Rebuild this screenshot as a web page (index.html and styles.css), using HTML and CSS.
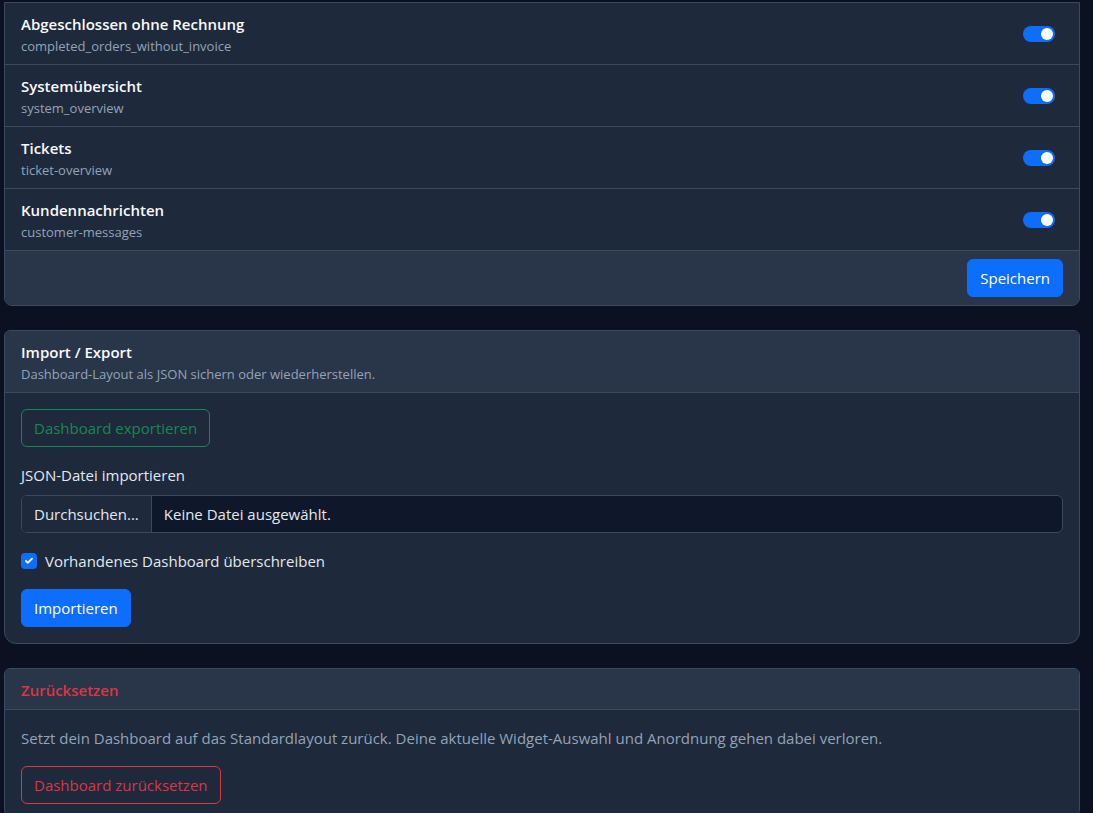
FILE: index.html
```html
<!DOCTYPE html>
<html lang="de">
<head>
    <meta charset="UTF-8">
    <meta name="viewport" content="width=device-width, initial-scale=1.0">
    <title>Dashboard-Einstellungen</title>
    <link rel="stylesheet" href="styles.css">
</head>
<body>
<div class="page">
    <div class="card card-clipped">
        <div class="widget-list">
            <div class="widget-row">
                <div>
                    <div class="widget-title">Abgeschlossen ohne Rechnung</div>
                    <div class="widget-key">completed_orders_without_invoice</div>
                </div>
                <span class="switch on"></span>
            </div>
            <div class="widget-row">
                <div>
                    <div class="widget-title">Systemübersicht</div>
                    <div class="widget-key">system_overview</div>
                </div>
                <span class="switch on"></span>
            </div>
            <div class="widget-row">
                <div>
                    <div class="widget-title">Tickets</div>
                    <div class="widget-key">ticket-overview</div>
                </div>
                <span class="switch on"></span>
            </div>
            <div class="widget-row">
                <div>
                    <div class="widget-title">Kundennachrichten</div>
                    <div class="widget-key">customer-messages</div>
                </div>
                <span class="switch on"></span>
            </div>
        </div>
        <div class="card-footer">
            <button class="btn btn-primary">Speichern</button>
        </div>
    </div>

    <div class="card">
        <div class="card-header">
            <div class="card-title">Import / Export</div>
            <div class="card-subtitle">Dashboard-Layout als JSON sichern oder wiederherstellen.</div>
        </div>
        <div class="card-body">
            <button class="btn btn-outline-success">Dashboard exportieren</button>
            <div class="field-label">JSON-Datei importieren</div>
            <div class="file-input">
                <span class="file-button">Durchsuchen...</span>
                <span class="file-name">Keine Datei ausgewählt.</span>
            </div>
            <label class="check-row">
                <span class="checkbox">
                    <svg viewBox="0 0 20 20" width="12" height="12"><path d="M5 10l3 3 7-7" fill="none" stroke="#fff" stroke-width="3" stroke-linecap="round" stroke-linejoin="round"/></svg>
                </span>
                Vorhandenes Dashboard überschreiben
            </label>
            <button class="btn btn-primary">Importieren</button>
        </div>
    </div>

    <div class="card">
        <div class="card-header">
            <div class="card-title text-danger">Zurücksetzen</div>
        </div>
        <div class="card-body">
            <p class="muted">Setzt dein Dashboard auf das Standardlayout zurück. Deine aktuelle Widget-Auswahl und Anordnung gehen dabei verloren.</p>
            <button class="btn btn-outline-danger">Dashboard zurücksetzen</button>
        </div>
    </div>
</div>
</body>
</html>
```

FILE: styles.css
```css
body {
    margin: 0;
    background-color: #0b1120;
    color: #e2e8f0;
    font-family: "Open Sans", "Noto Sans", sans-serif;
    font-size: 15px;
    line-height: 24px;
}

.page {
    width: 1076px;
    margin-left: 4px;
    padding-top: 2px;
}

.card {
    background-color: #1e293b;
    border: 1px solid #3b4a5f;
    border-radius: 6px 6px 12px 12px;
    margin-bottom: 24px;
    overflow: hidden;
}

/* top of this card is scrolled out of view */
.card-clipped {
    border-radius: 0 0 8px 8px;
}

.widget-row {
    display: flex;
    justify-content: space-between;
    align-items: center;
    padding: 9px 24px 7px 16px;
    border-bottom: 1px solid #3b4a5f;
}

.widget-title,
.card-title {
    font-weight: 600;
    color: #f8fafc;
}

.widget-key,
.card-subtitle {
    font-size: 13px;
    line-height: 21px;
    color: #94a3b8;
}

.switch {
    width: 32px;
    height: 16px;
    margin-top: -2px;
    border-radius: 8px;
    background-color: #0d6efd;
    position: relative;
}

.switch::after {
    content: "";
    position: absolute;
    top: 2px;
    right: 2px;
    width: 12px;
    height: 12px;
    border-radius: 50%;
    background-color: #fff;
}

.card-footer {
    display: flex;
    justify-content: flex-end;
    padding: 8px 16px;
    background-color: #293548;
}

.card-header {
    padding: 9px 16px 7px;
    background-color: #293548;
    border-bottom: 1px solid #3b4a5f;
}

.card-body {
    padding: 16px;
}

.btn {
    display: inline-block;
    font-family: inherit;
    font-size: 15px;
    line-height: 24px;
    padding: 6px 12px;
    border-radius: 6px;
    border: 1px solid transparent;
    background: none;
    cursor: pointer;
}

.btn-primary {
    background-color: #0d6efd;
    border-color: #0d6efd;
    color: #fff;
}

.btn-outline-success {
    border-color: #198754;
    color: #198754;
}

.btn-outline-danger {
    border-color: #dc3545;
    color: #dc3545;
}

.text-danger {
    color: #dc3545;
}

.field-label {
    margin-top: 16px;
    margin-bottom: 8px;
}

.file-input {
    display: flex;
    height: 36px;
    border: 1px solid #3b4a5f;
    border-radius: 6px;
    overflow: hidden;
    background-color: #0f172a;
    align-items: stretch;
}

.file-button {
    display: flex;
    align-items: center;
    padding: 0 12px;
    background-color: #1e293b;
    border-right: 1px solid #3b4a5f;
}

.file-name {
    display: flex;
    align-items: center;
    padding: 0 12px;
}

.check-row {
    display: flex;
    align-items: center;
    gap: 8px;
    margin: 16px 0;
}

.checkbox {
    width: 16px;
    height: 16px;
    border-radius: 4px;
    background-color: #0d6efd;
    display: flex;
    align-items: center;
    justify-content: center;
}

.muted {
    color: #94a3b8;
    margin: 0 0 16px;
}
```
